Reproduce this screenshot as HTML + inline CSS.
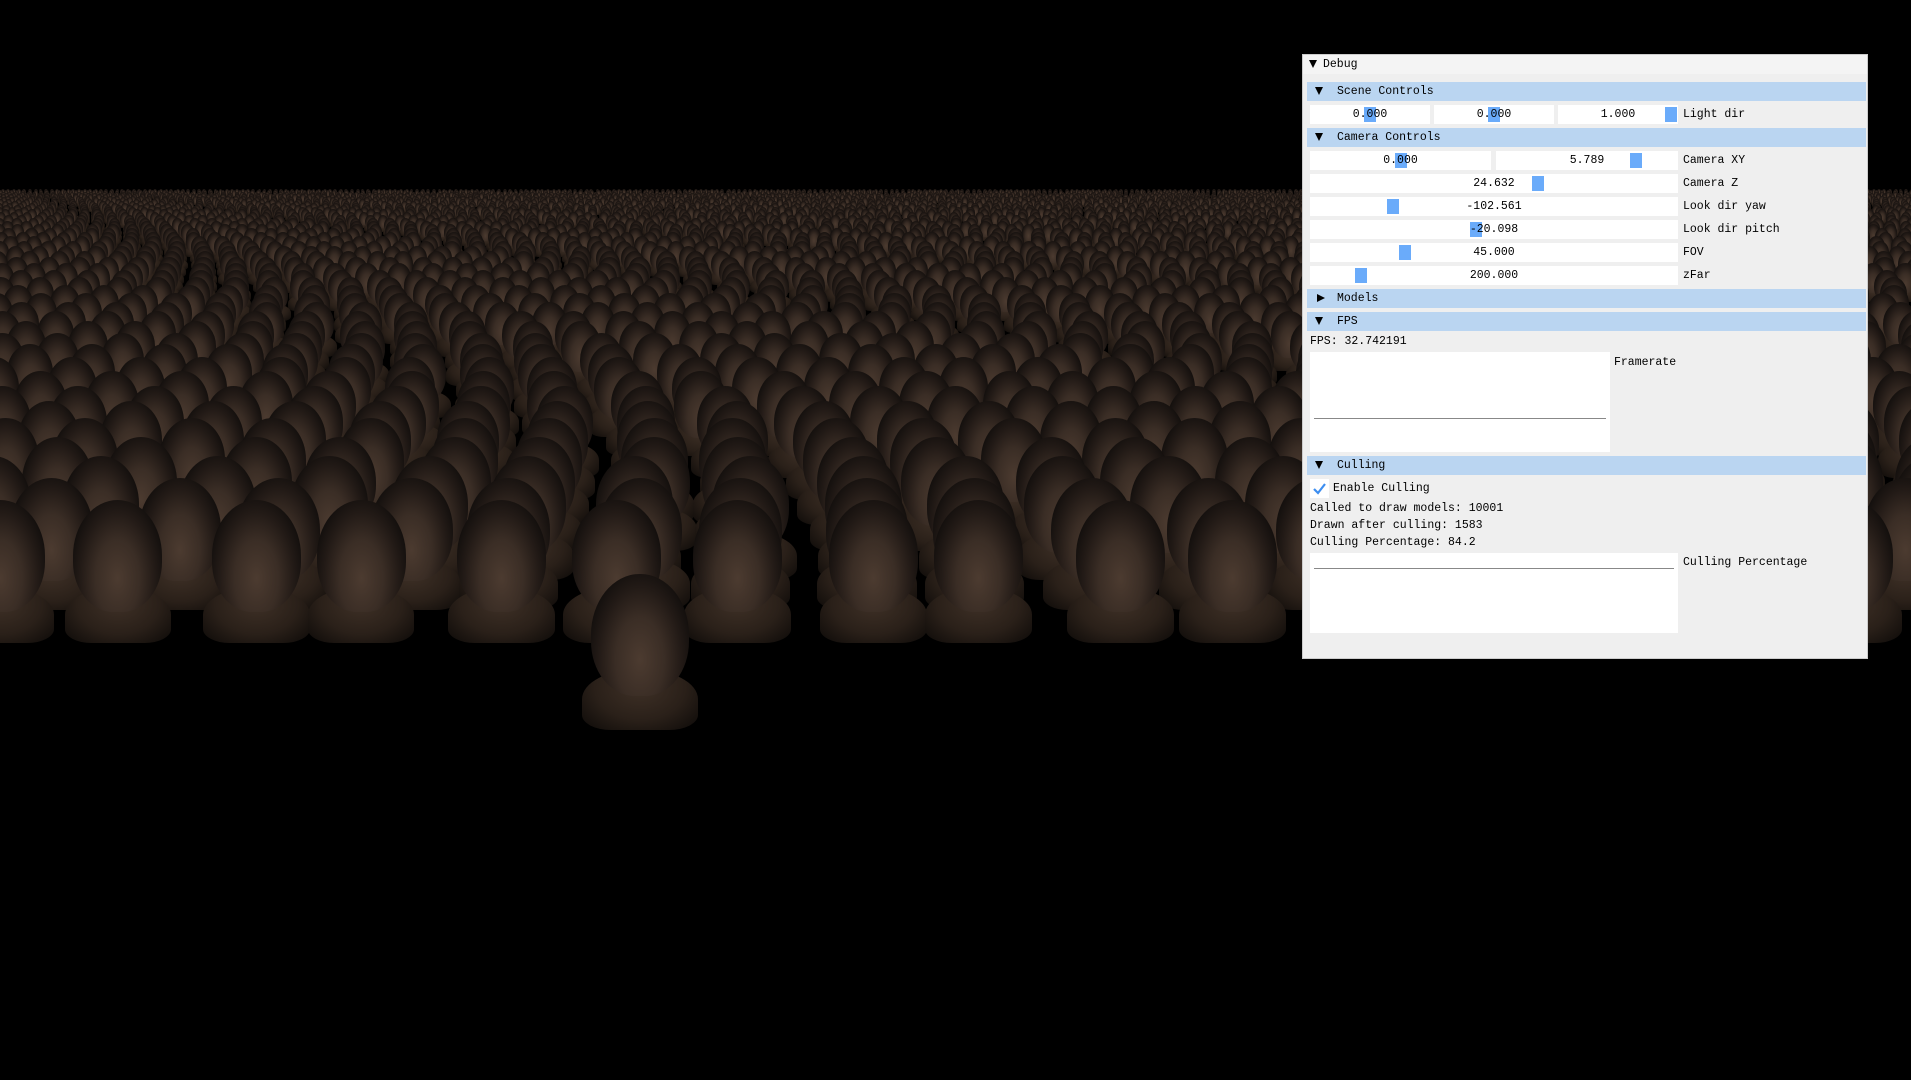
<!DOCTYPE html>
<html><head><meta charset="utf-8"><style>
html,body{margin:0;padding:0;width:1911px;height:1080px;background:#000;overflow:hidden;position:relative;font-family:"Liberation Mono","DejaVu Sans Mono",monospace;font-size:11.5px;color:#000}
#scene{position:absolute;left:0;top:0;width:1911px;height:1080px}
.h{position:absolute;border-radius:50% 50% 45% 45%;background:radial-gradient(ellipse at 50% 70%,#4c3b30 0%,#3a2d25 35%,#221a16 60%,#0c0a09 85%,#050404 100%)}
.sh{position:absolute;border-radius:50% 50% 25% 25%;background:radial-gradient(ellipse at 50% 30%,#3e3026 0%,#2a2019 55%,#0d0a08 100%)}
#p{position:absolute;left:1302px;top:54px;width:566px;height:605px;background:#efefef;border:1px solid #ccc;box-sizing:border-box}
.t{position:absolute;white-space:pre;line-height:19px}
.hd{position:absolute;left:4px;width:559px;height:19px;background:#bad5f1}
.w{position:absolute;height:19px;background:#fff}
.g{position:absolute;top:2px;width:12px;height:15px;background:#6aabfa}
.tri{position:absolute;left:8px;top:5px;width:0;height:0;border-left:4.5px solid transparent;border-right:4.5px solid transparent;border-top:8px solid #000}
.trr{position:absolute;left:10px;top:5px;width:0;height:0;border-top:4.5px solid transparent;border-bottom:4.5px solid transparent;border-left:8px solid #000}
</style></head><body>
<div id="scene"></div>
<div id="p">
 <div style="position:absolute;left:0;top:0;width:564px;height:19px;background:#f4f4f4"></div>
 <div class="tri" style="left:6px"></div><div class="t" style="left:20px;top:0">Debug</div>

 <div class="hd" style="top:27px"><div class="tri"></div><div class="t" style="left:30px">Scene Controls</div></div>
 <div class="w" style="left:7px;top:50px;width:120px"><div class="g" style="left:54px"></div><div class="t" style="left:0;width:120px;text-align:center">0.000</div></div>
 <div class="w" style="left:131px;top:50px;width:120px"><div class="g" style="left:54px"></div><div class="t" style="left:0;width:120px;text-align:center">0.000</div></div>
 <div class="w" style="left:255px;top:50px;width:120px"><div class="g" style="left:107px"></div><div class="t" style="left:0;width:120px;text-align:center">1.000</div></div>
 <div class="t" style="left:380px;top:50px">Light dir</div>

 <div class="hd" style="top:73px"><div class="tri"></div><div class="t" style="left:30px">Camera Controls</div></div>
 <div class="w" style="left:7px;top:96px;width:181px"><div class="g" style="left:85px"></div><div class="t" style="left:0;width:181px;text-align:center">0.000</div></div>
 <div class="w" style="left:193px;top:96px;width:182px"><div class="g" style="left:134px"></div><div class="t" style="left:0;width:182px;text-align:center">5.789</div></div>
 <div class="t" style="left:380px;top:96px">Camera XY</div>

 <div class="w" style="left:7px;top:119px;width:368px"><div class="g" style="left:222px"></div><div class="t" style="left:0;width:368px;text-align:center">24.632</div></div>
 <div class="t" style="left:380px;top:119px">Camera Z</div>
 <div class="w" style="left:7px;top:142px;width:368px"><div class="g" style="left:77px"></div><div class="t" style="left:0;width:368px;text-align:center">-102.561</div></div>
 <div class="t" style="left:380px;top:142px">Look dir yaw</div>
 <div class="w" style="left:7px;top:165px;width:368px"><div class="g" style="left:160px"></div><div class="t" style="left:0;width:368px;text-align:center">-20.098</div></div>
 <div class="t" style="left:380px;top:165px">Look dir pitch</div>
 <div class="w" style="left:7px;top:188px;width:368px"><div class="g" style="left:89px"></div><div class="t" style="left:0;width:368px;text-align:center">45.000</div></div>
 <div class="t" style="left:380px;top:188px">FOV</div>
 <div class="w" style="left:7px;top:211px;width:368px"><div class="g" style="left:45px"></div><div class="t" style="left:0;width:368px;text-align:center">200.000</div></div>
 <div class="t" style="left:380px;top:211px">zFar</div>

 <div class="hd" style="top:234px"><div class="trr"></div><div class="t" style="left:30px">Models</div></div>
 <div class="hd" style="top:257px"><div class="tri"></div><div class="t" style="left:30px">FPS</div></div>
 <div class="t" style="left:7px;top:277px">FPS: 32.742191</div>
 <div class="w" style="left:7px;top:297px;width:300px;height:100px"><div style="position:absolute;left:4px;right:4px;top:66px;height:1px;background:#888"></div></div>
 <div class="t" style="left:311px;top:298px">Framerate</div>

 <div class="hd" style="top:401px"><div class="tri"></div><div class="t" style="left:30px">Culling</div></div>
 <div class="w" style="left:7px;top:424px;width:19px;height:19px"><svg width="19" height="19" style="position:absolute;left:0;top:0"><path d="M4 10 L8 14 L15 5" stroke="#3d8ef0" stroke-width="2.2" fill="none"/></svg></div>
 <div class="t" style="left:30px;top:424px">Enable Culling</div>
 <div class="t" style="left:7px;top:444px">Called to draw models: 10001</div>
 <div class="t" style="left:7px;top:461px">Drawn after culling: 1583</div>
 <div class="t" style="left:7px;top:478px">Culling Percentage: 84.2</div>
 <div class="w" style="left:7px;top:498px;width:368px;height:80px"><div style="position:absolute;left:4px;right:4px;top:15px;height:1px;background:#888"></div></div>
 <div class="t" style="left:380px;top:498px">Culling Percentage</div>
</div>
<script>
var s=document.getElementById('scene'),h='';
function head(x,y,sz){
 var w=sz*0.72,hh=sz*0.9;
 h+='<div class="sh" style="left:'+(x-w*0.6)+'px;top:'+(y+hh*0.28)+'px;width:'+(w*1.2)+'px;height:'+(hh*0.5)+'px"></div>';
 h+='<div class="h" style="left:'+(x-w/2)+'px;top:'+(y-hh/2)+'px;width:'+w+'px;height:'+hh+'px"></div>';
}
var i=0;
for(var d=110;d>=4.6;d*=0.93){
 i++;
 var y=175+1850/d,sz=600/d,sp=600/d,off=(i%2)*sp/2;
 for(var x=-sp+off;x<1911+sp;x+=sp){ head(x+(Math.sin(x*7.3+i)*sp*0.08),y,sz); }
}
head(640,635,135);
s.innerHTML=h;
</script>
</body></html>
